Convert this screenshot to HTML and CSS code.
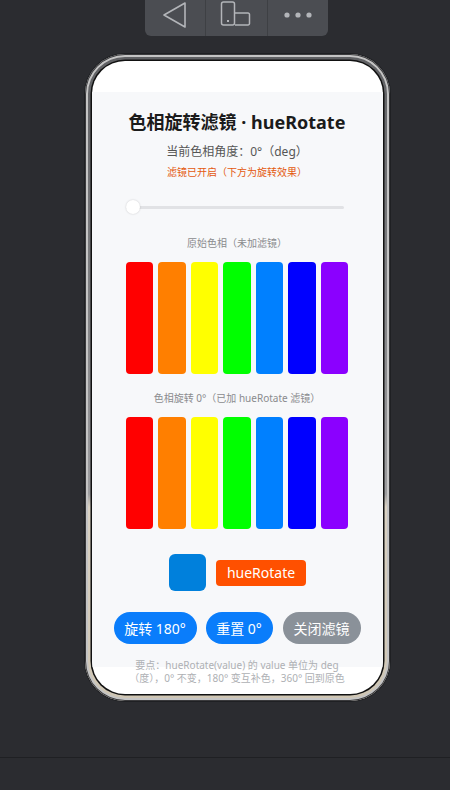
FILE: index.html
```html
<!DOCTYPE html>
<html lang="zh-CN">
<head>
    <meta charset="UTF-8">
    <meta name="viewport" content="width=device-width, initial-scale=1.0">
    <title>hueRotate 预览</title>
    <link rel="stylesheet" href="styles.css">
</head>
<body>

    <div class="stage">
        <!-- preview toolbar -->
        <div class="toolbar">
            <div class="tool">
                <svg width="26" height="28" viewBox="0 0 26 28">
                    <path d="M23 2 L2 14 L23 26 Z" fill="none" stroke="#b3b5b9" stroke-width="1.6" stroke-linejoin="round"/>
                </svg>
            </div>
            <div class="tool">
                <svg width="32" height="28" viewBox="0 0 32 28">
                    <rect x="1.5" y="1" width="13" height="23" rx="2" fill="none" stroke="#b3b5b9" stroke-width="1.5"/>
                    <rect x="7" y="19" width="2" height="2" fill="#b3b5b9"/>
                    <path d="M15 12 H28 A1.5 1.5 0 0 1 29.5 13.5 V22.5 A1.5 1.5 0 0 1 28 24 H15" fill="none" stroke="#b3b5b9" stroke-width="1.5"/>
                </svg>
            </div>
            <div class="tool">
                <svg width="30" height="28" viewBox="0 0 30 28">
                    <circle cx="4" cy="14" r="2.6" fill="#b3b5b9"/>
                    <circle cx="15" cy="14" r="2.6" fill="#b3b5b9"/>
                    <circle cx="26" cy="14" r="2.6" fill="#b3b5b9"/>
                </svg>
            </div>
        </div>

        <!-- device -->
        <div class="phone">
            <div class="screen">
                <div class="status-bar"></div>
                <div class="content">
                    <div class="title">色相旋转滤镜 · hueRotate</div>
                    <div class="subtitle">当前色相角度：0°（deg）</div>
                    <div class="state">滤镜已开启（下方为旋转效果）</div>

                    <div class="slider">
                        <div class="track"></div>
                        <div class="thumb"></div>
                    </div>

                    <div class="label">原始色相（未加滤镜）</div>
                    <div class="bars" id="barsOriginal"></div>

                    <div class="label label-second">色相旋转 0°（已加 hueRotate 滤镜）</div>
                    <div class="bars" id="barsRotated"></div>

                    <div class="samples">
                        <div class="swatch"></div>
                        <div class="tag">hueRotate</div>
                    </div>

                    <div class="actions">
                        <button class="btn btn-blue btn-rotate">旋转 180°</button>
                        <button class="btn btn-blue btn-reset">重置 0°</button>
                        <button class="btn btn-gray btn-off">关闭滤镜</button>
                    </div>

                    <div class="note">要点：hueRotate(value) 的 value 单位为 deg<br>（度），0° 不变，180° 变互补色，360° 回到原色</div>
                </div>
                <div class="home-area"></div>
            </div>
        </div>
    </div>

    <div class="bottom-bar"></div>

    <script>
        const hues = ['#ff0000', '#ff7f00', '#ffff00', '#00ff00', '#0080ff', '#0000ff', '#8b00ff'];

        // Fill both rows with the same hue bars
        function fillBars(id) {
            const box = document.getElementById(id);
            hues.forEach(color => {
                const bar = document.createElement('div');
                bar.className = 'bar';
                bar.style.backgroundColor = color;
                box.appendChild(bar);
            });
        }

        fillBars('barsOriginal');
        fillBars('barsRotated');
    </script>

</body>
</html>
```

FILE: styles.css
```css
html, body {
    margin: 0;
    padding: 0;
}

body {
    background-color: #2b2c30;
    font-family: "Noto Sans", "Noto Sans CJK SC", sans-serif;
    width: 450px;
    height: 790px;
    overflow: hidden;
}

.stage {
    display: flex;
    flex-direction: column;
    align-items: center;
    padding-left: 24px;
    height: 757px;
}

.toolbar {
    display: flex;
    width: 183px;
    height: 36px;
    background-color: #4b4d52;
    border-radius: 0 0 6px 6px;
    margin-left: -1px;
}

.tool {
    flex: 1;
    display: flex;
    align-items: center;
    justify-content: center;
    border-right: 1px solid #3e4044;
    padding-bottom: 6px;
}

.tool:last-child {
    border-right: none;
}

.phone {
    margin-top: 18px;
    width: 305px;
    height: 647px;
    box-sizing: border-box;
    padding: 7px;
    border-radius: 40px;
    background: linear-gradient(to bottom, #5f6063 0%, #9d9d9f 68%, #d9d1c2 70%, #cfc6b4 100%);
    box-shadow: inset 0 0 0 1px #3a3a3c, inset 0 0 0 3px #c4c4c4, 0 0 0 1px #1f2023;
}

.screen {
    width: 100%;
    height: 100%;
    border-radius: 33px;
    background-color: #fff;
    overflow: hidden;
    display: flex;
    flex-direction: column;
    box-shadow: 0 0 0 1.5px #111;
}

.status-bar {
    height: 31px;
    flex-shrink: 0;
}

.content {
    height: 575px;
    flex-shrink: 0;
    background-color: #f7f8fa;
    display: flex;
    flex-direction: column;
    align-items: center;
    position: relative;
    z-index: 1;
}

.content > div {
    flex-shrink: 0;
}

.home-area {
    flex: 1;
}

.title {
    margin-top: 18px;
    font-size: 18px;
    line-height: 24px;
    font-weight: bold;
    color: #1b1b1b;
}

.subtitle {
    margin-top: 10px;
    font-size: 12px;
    line-height: 16px;
    color: #555;
}

.state {
    margin-top: 5px;
    font-size: 10px;
    line-height: 14px;
    color: #e4590f;
}

.slider {
    margin-top: 21px;
    width: 218px;
    height: 14px;
    display: flex;
    align-items: center;
    position: relative;
    margin-left: -4px;
}

.track {
    width: 100%;
    height: 3px;
    border-radius: 2px;
    background-color: #e1e2e5;
}

.thumb {
    position: absolute;
    left: 0;
    top: 0;
    width: 14px;
    height: 14px;
    border-radius: 50%;
    background-color: #fff;
    box-shadow: 0 0 2px rgba(0, 0, 0, 0.2);
}

.label {
    margin-top: 22px;
    font-size: 10px;
    line-height: 14px;
    color: #8a8b8e;
}

.label-second {
    margin-top: 17px;
}

.bars {
    margin-top: 12px;
    width: 222px;
    height: 112px;
    display: flex;
    gap: 5px;
}

.bar {
    flex: 1;
    border-radius: 4px;
}

.samples {
    margin-top: 25px;
    display: flex;
    align-items: center;
    gap: 10px;
    margin-left: 1px;
}

.swatch {
    width: 37px;
    height: 37px;
    border-radius: 6px;
    background-color: #0080dc;
}

.tag {
    width: 90px;
    height: 26px;
    line-height: 26px;
    text-align: center;
    border-radius: 4px;
    background-color: #ff5000;
    color: #fff;
    font-size: 14px;
}

.actions {
    margin-top: 21px;
    display: flex;
    gap: 9px;
}

.btn {
    height: 32px;
    border: none;
    border-radius: 16px;
    color: #fff;
    font-family: "Noto Sans", "Noto Sans CJK SC", sans-serif;
    font-size: 14px;
    padding: 0;
}

.btn-blue {
    background-color: #0a7dfb;
}

.btn-gray {
    background-color: #8a9199;
}

.btn-rotate {
    width: 83px;
}

.btn-reset {
    width: 67px;
}

.btn-off {
    width: 78px;
    margin-left: 1px;
}

.note {
    margin-top: 15px;
    font-size: 10px;
    line-height: 13px;
    color: #aeb0b4;
    text-align: center;
    white-space: nowrap;
}

.bottom-bar {
    height: 33px;
    border-top: 1px solid #1f2023;
}
```
